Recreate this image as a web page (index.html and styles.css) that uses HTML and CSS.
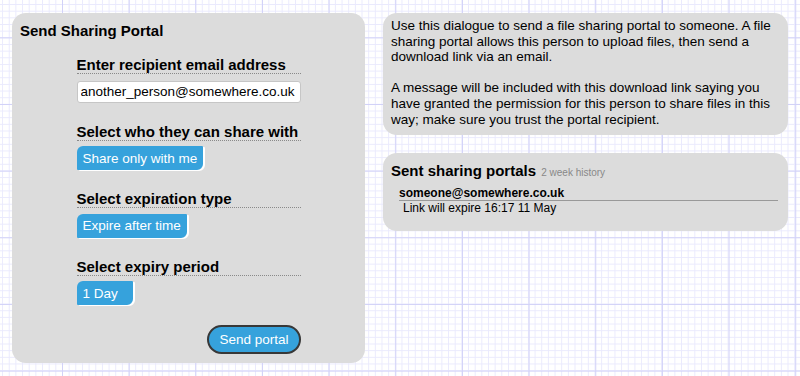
FILE: index.html
```html
<!DOCTYPE html>
<html lang="en">
  <head>
    <meta charset="UTF-8" />
    <meta name="viewport" content="width=device-width, initial-scale=1.0" />
    <title>Send Sharing Portal</title>
    <link rel="stylesheet" href="styles.css">
  </head>
  <body>
    <div class="portal-layout">
      <div class="panel send-panel">
        <h2 class="panel-title">Send Sharing Portal</h2>
        <form class="portal-form">
          <div class="form-group">
            <label for="inputRecipient" class="form-label">Enter recipient email address</label>
            <input
              type="text"
              id="inputRecipient"
              class="form-input"
              value="another_person@somewhere.co.uk"
            />
          </div>

          <div class="form-group">
            <div class="form-label">Select who they can share with</div>
            <button type="button" class="chip">Share only with me</button>
          </div>

          <div class="form-group">
            <div class="form-label">Select expiration type</div>
            <button type="button" class="chip">Expire after time</button>
          </div>

          <div class="form-group">
            <div class="form-label">Select expiry period</div>
            <button type="button" class="chip chip-short">1 Day</button>
          </div>

          <div class="form-actions">
            <button type="button" class="send-button">Send portal</button>
          </div>
        </form>
      </div>

      <div class="side-column">
        <div class="panel info-panel">
          <p>
            Use this dialogue to send a file sharing portal to someone. A file
            sharing portal allows this person to upload files, then send a
            download link via an email.
          </p>
          <p>
            A message will be included with this download link saying you have
            granted the permission for this person to share files in this way;
            make sure you trust the portal recipient.
          </p>
        </div>

        <div class="panel history-panel">
          <h3 class="history-title">Sent sharing portals <span class="history-note">2 week history</span></h3>
          <div class="history-entry">
            <div class="history-email">someone@somewhere.co.uk</div>
            <div class="history-expiry">Link will expire 16:17 11 May</div>
          </div>
        </div>
      </div>
    </div>
  </body>
</html>
```

FILE: styles.css
```css
/* Page with graph paper background */
body {
  margin: 0;
  padding: 13px 12px;
  font-family: "Liberation Sans", Arial, sans-serif;
  font-size: 13.5px;
  color: #000;
  background-color: #fff;
  background-image:
    linear-gradient(to right, #d2d2f8 1px, transparent 1px),
    linear-gradient(to bottom, #d2d2f8 1px, transparent 1px),
    linear-gradient(to right, #eaeafd 1px, transparent 1px),
    linear-gradient(to bottom, #eaeafd 1px, transparent 1px);
  background-size:
    66.667px 66.667px,
    66.667px 66.667px,
    6.667px 6.667px,
    6.667px 6.667px;
  background-position: 62px 37.33px;
}

.portal-layout {
  display: flex;
  align-items: flex-start;
  gap: 18px;
}

/* Grey rounded boxes */
.panel {
  background: #dcdcdc;
  border-radius: 14px;
}

.send-panel {
  width: 353px;
  box-sizing: border-box;
  padding: 9px 8px;
}

.panel-title {
  margin: 0;
  font-size: 15px;
}

.portal-form {
  width: 224px;
  margin: 17px auto 0;
}

.form-group {
  margin-bottom: 20px;
}

.form-label {
  display: block;
  font-size: 15px;
  font-weight: bold;
  border-bottom: 1px dotted #8a8a8a;
}

.form-input {
  display: block;
  width: 100%;
  height: 22px;
  margin-top: 6.5px;
  padding: 0 3px;
  box-sizing: border-box;
  border: 1px solid #c6c6c6;
  border-radius: 3px;
  background: #fff;
  font-family: inherit;
  font-size: 13.5px;
  color: #000;
}

/* Blue option buttons */
.chip {
  display: block;
  height: 24px;
  margin-top: 5.5px;
  padding: 0 6px;
  border: none;
  border-radius: 6px 1px 6px 1px;
  background: #36a2dc;
  box-shadow: 2px 1px 0 #fff;
  color: #fff;
  font-family: inherit;
  font-size: 13.5px;
  text-align: left;
  cursor: pointer;
}

.chip-short {
  width: 56px;
}

.form-actions {
  display: flex;
  justify-content: flex-end;
}

.send-button {
  height: 29px;
  padding: 0 10px;
  border: 2px solid #383838;
  border-radius: 15px;
  background: #36a2dc;
  color: #fff;
  font-family: inherit;
  font-size: 13.5px;
  cursor: pointer;
}

.side-column {
  flex: 1;
  display: flex;
  flex-direction: column;
  gap: 18px;
}

.info-panel {
  padding: 5px 8px 8px;
  line-height: 15.6px;
}

.info-panel p {
  margin: 0;
}

.info-panel p + p {
  margin-top: 15.6px;
}

.history-panel {
  padding: 9px 8px 8px;
}

.history-title {
  margin: 0;
  font-size: 15px;
}

.history-note {
  margin-left: 1px;
  font-size: 10px;
  font-weight: normal;
  color: #888;
}

.history-entry {
  margin: 7px 2px 8px 8px;
  font-size: 12px;
}

.history-email {
  font-weight: bold;
  border-bottom: 1px solid #999;
}

.history-expiry {
  padding-left: 4px;
}
```
